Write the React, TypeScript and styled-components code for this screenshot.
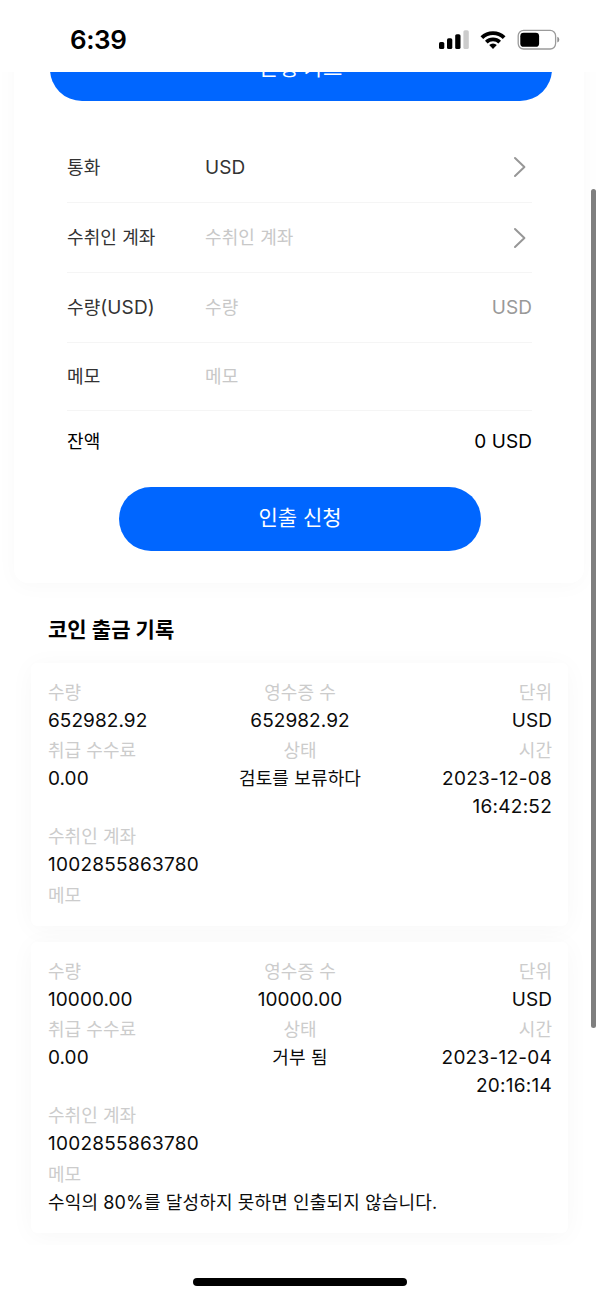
import React from "react";
import styled, { createGlobalStyle } from "styled-components";

const GlobalStyle = createGlobalStyle`
  * { box-sizing: border-box; }
  body {
    margin: 0;
    background: #fff;
    color: #0b0b0b;
    font-family: Inter, "Noto Sans CJK KR", sans-serif;
    overflow: hidden;
  }
`;

const Phone = styled.div`
  position: relative;
  width: 600px;
  height: 1298px;
  display: flex;
  flex-direction: column;
  overflow: hidden;
  background: #fff;
`;

const StatusBar = styled.header`
  flex: none;
  height: 72px;
  padding: 7px 40px 0 70px;
  display: flex;
  align-items: center;
  justify-content: space-between;
`;

const Clock = styled.span`
  font-size: 26px;
  line-height: 30px;
  font-weight: 600;
  letter-spacing: -0.4px;
  color: #000;
`;

const StatusIcons = styled.div`
  display: flex;
  align-items: center;
  height: 22px;
  margin-top: 1px;
`;

const Scroll = styled.main`
  flex: none;
  height: 1173px;
  overflow: hidden;
  display: flex;
  flex-direction: column;
`;

const FormCard = styled.section`
  flex: none;
  height: 571px;
  margin: -60px 16px 0 14px;
  padding: 25px 32.5px 0 36px;
  display: flex;
  flex-direction: column;
  border-radius: 14px;
  background: #fff;
  box-shadow: 0 3px 22px rgba(0, 0, 0, 0.026);
`;

const Pill = styled.button<{ $inset?: boolean }>`
  flex: none;
  height: 64px;
  margin: ${(p) => (p.$inset ? "18px 70.5px 0 69px" : "0")};
  padding: 0 0 7px;
  border: 0;
  border-radius: 32px;
  background: #0066ff;
  color: #fff;
  font: inherit;
  font-size: 21px;
`;

const Fields = styled.div`
  display: flex;
  flex-direction: column;
  padding: 31px 19.5px 0 17px;
`;

const Field = styled.div<{ $height: number }>`
  height: ${(p) => p.$height}px;
  padding-top: 1px;
  display: flex;
  align-items: center;
  border-bottom: 1.5px solid #f5f5f5;
  color: #333;
`;

const FieldLabel = styled.span`
  flex: 0 0 138px;
  display: flex;
`;

const FieldValue = styled.span`
  flex: 1;
`;

const Text = styled.span<{ $latin?: boolean; $color?: string }>`
  font-size: ${(p) => (p.$latin ? 19 : 18)}px;
  letter-spacing: 0.1px;
  line-height: 28px;
  color: ${(p) => p.$color || "inherit"};
  white-space: nowrap;
`;

const Arrow = styled.svg`
  flex: none;
  margin: 0 5px 1px 0;
`;

const Balance = styled.div`
  height: 58px;
  padding-top: 3px;
  display: flex;
  align-items: center;
  justify-content: space-between;
  color: #000;
`;

const Title = styled.h2`
  flex: none;
  margin: 32px 48px 18px;
  font-size: 21px;
  line-height: 30px;
  font-weight: 700;
  letter-spacing: 0.05px;
  color: #000;
`;

const RecordCard = styled.article`
  flex: none;
  margin: 0 32.5px 16px 31px;
  padding: 15.6px 15.5px 16.6px 17px;
  border-radius: 6px;
  background: #fff;
  box-shadow: 0 3px 26px rgba(0, 0, 0, 0.036);
`;

const RecordGrid = styled.div`
  display: grid;
  grid-template-columns: repeat(3, 1fr);
  row-gap: 2.6px;
`;

type Align = "left" | "center" | "right";

const Cell = styled.div<{ $align?: Align; $wide?: boolean }>`
  display: flex;
  flex-direction: column;
  grid-column: ${(p) => (p.$wide ? "1 / -1" : "auto")};
  text-align: ${(p) => p.$align || "left"};
`;

const CellLabel = styled.span`
  font-size: 18px;
  line-height: 28px;
  letter-spacing: 0.05px;
  color: #ccc;
`;

const CellValue = styled.span<{ $latin?: boolean; $tracking: number }>`
  font-size: ${(p) => (p.$latin ? 19 : 18)}px;
  line-height: 27.8px;
  letter-spacing: ${(p) => p.$tracking}px;
  white-space: pre-line;
`;

const ScrollThumb = styled.div`
  position: absolute;
  left: 590.5px;
  top: 189px;
  width: 5px;
  height: 839px;
  border-radius: 3px;
  background: #7f7f7f;
`;

const HomeBar = styled.div`
  flex: none;
  align-self: center;
  width: 214px;
  height: 8px;
  margin-top: 33px;
  border-radius: 4px;
  background: #000;
`;

const isLatin = (s: string) => !/[가-힣]/.test(s);

const trackingFor = (s: string) => {
  if (!isLatin(s)) return 0.14;
  return s.length > 10 ? 0.25 : 0.06;
};

const T = ({ children, color }: { children: string; color?: string }) => (
  <Text $latin={isLatin(children)} $color={color}>
    {children}
  </Text>
);

const Chevron = () => (
  <Arrow width="14" height="22" viewBox="0 0 14 22" fill="none">
    <path d="M2 2 11.4 11 2 20" stroke="#979797" strokeWidth="2" strokeLinecap="round" strokeLinejoin="round" />
  </Arrow>
);

type RecordData = {
  amount: string;
  status: string;
  time: string;
  memo?: string;
};

const records: RecordData[] = [
  { amount: "652982.92", status: "검토를 보류하다", time: "2023-12-08\n16:42:52" },
  {
    amount: "10000.00",
    status: "거부 됨",
    time: "2023-12-04\n20:16:14",
    memo: "수익의 80%를 달성하지 못하면 인출되지 않습니다.",
  },
];

const Entry = ({ label, value, align, wide }: { label: string; value?: string; align?: Align; wide?: boolean }) => (
  <Cell $align={align} $wide={wide}>
    <CellLabel>{label}</CellLabel>
    {value && (
      <CellValue $latin={isLatin(value)} $tracking={trackingFor(value)}>
        {value}
      </CellValue>
    )}
  </Cell>
);

const Record = ({ data }: { data: RecordData }) => (
  <RecordCard>
    <RecordGrid>
      <Entry label="수량" value={data.amount} />
      <Entry label="영수증 수" value={data.amount} align="center" />
      <Entry label="단위" value="USD" align="right" />
      <Entry label="취급 수수료" value="0.00" />
      <Entry label="상태" value={data.status} align="center" />
      <Entry label="시간" value={data.time} align="right" />
      <Entry label="수취인 계좌" value="1002855863780" wide />
      <Entry label="메모" value={data.memo} wide />
    </RecordGrid>
  </RecordCard>
);

export default function App() {
  return (
    <>
      <GlobalStyle />
      <Phone>
        <StatusBar>
          <Clock>6:39</Clock>
          <StatusIcons>
            <svg width="122" height="22" viewBox="438 29 122 22">
              <rect x="439" y="42" width="5.3" height="7" rx="1.6" />
              <rect x="447" y="38.3" width="5.3" height="10.7" rx="1.6" />
              <rect x="455.2" y="34.2" width="5.3" height="14.8" rx="1.6" />
              <rect x="463.4" y="30.2" width="5.4" height="18.8" rx="1.6" fill="#ccc" />
              <path d="M480.5 36.2a18 18 0 0 1 25 0l-2.7 2.8a14 14 0 0 0-19.6 0z" />
              <path d="M485 40.7a11.6 11.6 0 0 1 16 0l-2.6 2.7a7.8 7.8 0 0 0-10.8 0z" />
              <path d="M489.2 45a5.5 5.5 0 0 1 7.6 0L493 49z" />
              <rect x="518.2" y="30.4" width="37.4" height="18.6" rx="5.4" fill="none" stroke="#9b9b9b" strokeWidth="1.3" />
              <rect x="520.3" y="32.8" width="18.8" height="14" rx="3.4" />
              <path d="M557.3 36.8a3.1 3.1 0 0 1 0 5.8z" fill="#8f8f8f" />
            </svg>
          </StatusIcons>
        </StatusBar>
        <Scroll>
          <FormCard>
            <Pill>은행 카드</Pill>
            <Fields>
              <Field $height={71}>
                <FieldLabel><T>통화</T></FieldLabel>
                <FieldValue><T>USD</T></FieldValue>
                <Chevron />
              </Field>
              <Field $height={70}>
                <FieldLabel><T>수취인 계좌</T></FieldLabel>
                <FieldValue><T color="#c8c8c8">수취인 계좌</T></FieldValue>
                <Chevron />
              </Field>
              <Field $height={70}>
                <FieldLabel><T>수량</T><T>(USD)</T></FieldLabel>
                <FieldValue><T color="#c8c8c8">수량</T></FieldValue>
                <T color="#999">USD</T>
              </Field>
              <Field $height={68}>
                <FieldLabel><T>메모</T></FieldLabel>
                <FieldValue><T color="#c8c8c8">메모</T></FieldValue>
              </Field>
              <Balance>
                <T>잔액</T>
                <T>0 USD</T>
              </Balance>
            </Fields>
            <Pill $inset>인출 신청</Pill>
          </FormCard>
          <Title>코인 출금 기록</Title>
          {records.map((r) => (
            <Record key={r.time} data={r} />
          ))}
        </Scroll>
        <HomeBar />
        <ScrollThumb />
      </Phone>
    </>
  );
}
